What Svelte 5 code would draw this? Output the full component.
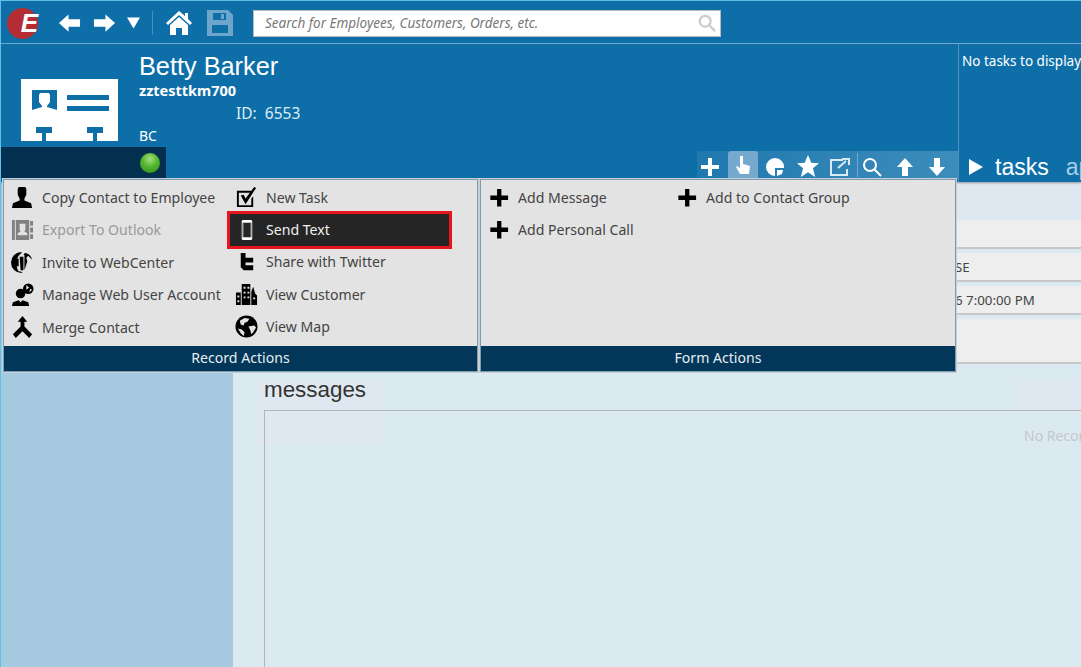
<script lang="ts">
	const recordLeft = [
		{ icon: 'person', label: 'Copy Contact to Employee' },
		{ icon: 'outlook', label: 'Export To Outlook', disabled: true },
		{ icon: 'webcenter', label: 'Invite to WebCenter' },
		{ icon: 'webuser', label: 'Manage Web User Account' },
		{ icon: 'merge', label: 'Merge Contact' }
	];
	const recordRight = [
		{ icon: 'task', label: 'New Task' },
		{ icon: 'phone', label: 'Send Text', active: true },
		{ icon: 'twitter', label: 'Share with Twitter' },
		{ icon: 'city', label: 'View Customer' },
		{ icon: 'globe', label: 'View Map' }
	];
	const formLeft = ['Add Message', 'Add Personal Call'];
	const rows = [
		{ text: '', h: 29 },
		{ text: 'SE', h: 29 },
		{ text: '6 7:00:00 PM', h: 29 },
		{ text: '', h: 45 }
	];
</script>

{#snippet icon(name: string)}
	<svg class="ic" viewBox="0 0 24 24" aria-hidden="true">
		{#if name === 'person'}
			<path d="M8 1h7l1 2v6l-2 4v2l7 3 1 5H1l1-5 7-3v-2L7 9V3z" />
		{:else if name === 'outlook'}
			<path fill="#808080" d="M1 2h3v21H1zM5 2h14v21H5zM20 3h3v5h-3zM20 10h3v5h-3zM20 17h3v5h-3z" />
			<path fill="#e2e2e2" d="M9 6h6v6l-1 2 3 2v2H7v-2l3-2-1-2z" />
		{:else if name === 'webcenter'}
			<path d="M11 1a11 11 0 0 0 0 22l1-1-4-1c-3-3-3-14 1-17l2-2z" />
			<path d="M9 6h4v14h-3zM13 3h3l-1 3zM14 2c4 0 7 3 8 7l-4-4-2 2 1 4-3 9z" />
			<path d="M2 8h6v8H2z" />
		{:else if name === 'webuser'}
			<circle cx="10" cy="11" r="5" />
			<path d="M1 24l1-4 6-2 2 2 2-2 6 2 1 4z" />
			<circle cx="18" cy="6" r="5.500" />
			<path fill="#e2e2e2" d="M16 2l3 3-3 2zM20 6l2 1-3 3z" />
		{:else if name === 'merge'}
			<path d="M12 0l5 6h-3v5l8 8-3 4-7-7-7 7-3-4 8-8V6H7z" />
		{:else if name === 'task'}
			<path d="M2 5h15v2H4v13h13v-7l2-2v11H2z" />
			<path d="M6 10l3-1 2 4 9-12 2 1-11 17z" />
		{:else if name === 'phone'}
			<path fill="#fff" fill-rule="evenodd" d="M8 2h9l1 1v19l-1 1H8l-1-1V3zM8 5v15h9V5z" />
			<path fill="#8a8a8a" d="M8 5h1v15H8zM16 5h1v15h-1z" />
		{:else if name === 'twitter'}
			<path d="M6 3h5v5h8v5h-8v3h8v5H9l-3-3z" />
		{:else if name === 'city'}
			<path d="M7 1h9v22H7zM1 10h5v13H1zM17 9l2-5 2 7 2 2v10h-6z" />
			<path fill="#e2e2e2" d="M9 4h2v2H9zM13 4h2v2h-2zM9 9h2v2H9zM13 9h2v2h-2zM9 14h2v2H9zM13 14h2v2h-2zM2.500 13h2v2h-2zM2.500 18h2v2h-2zM19 15h2v2h-2z" />
		{:else if name === 'globe'}
			<circle cx="12" cy="12" r="11.500" />
			<path fill="#e2e2e2" d="M5 6l5-3 5 1-2 3-3 1-1 3-3-1zM14 12l6-1 2 2-3 5-2 2-1-4zM3 14l4 1 3 3-1 4-3-3z" />
		{:else if name === 'plus'}
			<path d="M10.500 3h4.500v7h7v4.500h-7v7h-4.500v-7h-7V10h7z" />
		{/if}
	</svg>
{/snippet}

{#snippet action(item: { icon: string; label: string; disabled?: boolean; active?: boolean })}
	<div class="action" class:disabled={item.disabled} class:active={item.active}>
		{@render icon(item.icon)}
		<span>{item.label}</span>
	</div>
{/snippet}

<div class="page">
	<header class="topbar">
		<div class="logo"><span>E</span></div>
		<div class="nav">
			<svg viewBox="0 0 24 20" class="arrow"><path d="M1 10l10-9v5h12v8H11v5z" /></svg>
			<svg viewBox="0 0 24 20" class="arrow"><path d="M23 10L13 1v5H1v8h12v5z" /></svg>
			<svg viewBox="0 0 14 12" class="drop"><path d="M0 0h14L7 12z" /></svg>
		</div>
		<div class="divider"></div>
		<svg viewBox="0 0 26 26" class="home">
			<path d="M13 1L0 13l2 2L13 5l11 10 2-2-4-4V3h-3v3z" />
			<path d="M4 15l9-8 9 8v10h-6v-7h-6v7H4z" />
		</svg>
		<svg viewBox="0 0 26 26" class="save">
			<path fill-rule="evenodd" d="M0 0h21l5 5v21H0zM6 3v7h13V3zM14 4h3v5h-3zM5 15v8h16v-8z" />
		</svg>
		<div class="search">
			<span>Search for Employees, Customers, Orders, etc.</span>
			<svg viewBox="0 0 20 20" class="glass"><circle cx="8" cy="8" r="6" /><path d="M12.500 12.500L19 19" /></svg>
		</div>
	</header>

	<section class="hero">
		<div class="profile">
			<div class="identity">
				<div class="card-wrap">
					<svg viewBox="0 0 97 62" class="card">
						<path fill="#fff" d="M0 0h97v62H0z" />
						<path fill="#0e6fa8" d="M11 11h25v23H11z" />
						<path fill="#fff" d="M19 14h9l1 2v7l-3 4v1l10 3v3H11v-3l10-3v-1l-3-4v-7z" />
						<path fill="#0e6fa8" d="M46 16h42v5H46zM46 27h42v5H46zM15 48h16v6h-6v8h-4v-8h-6zM66 48h16v6h-6v8h-4v-8h-6z" />
					</svg>
				</div>
				<div class="who">
					<h1>Betty Barker</h1>
					<div class="login">zztesttkm700</div>
					<div class="id">ID:&nbsp;&nbsp;6553</div>
					<div class="region">BC</div>
				</div>
			</div>
			<div class="strip-row">
				<div class="status"><div class="led"></div></div>
				<div class="tools">
					<svg viewBox="0 0 20 20" class="t"><path d="M8 1h4v7h7v4h-7v7H8v-7H1V8h7z" /></svg>
					<div class="t-on">
						<svg viewBox="0 0 20 20" class="t"><path d="M7 1h3v8l7 2-1 8H7L3 12l1-1 3 2z" /></svg>
					</div>
					<svg viewBox="0 0 20 20" class="t pie"><path d="M10 1a9 9 0 1 0 0 18v-8h9a9 9 0 0 0-9-10zM12 13h6l-1 4-5 2z" /></svg>
					<svg viewBox="0 0 20 20" class="t star"><path d="M10 0l3 7 7 .5-5.500 4.500 2 8-6.500-4.300L3.500 20l2-8L0 7.500 7 7z" /></svg>
					<svg viewBox="0 0 22 20" class="t open"><path d="M14 3H2v15h16v-6" /><path d="M9 11l8-7M13 2h7v6" /></svg>
					<div class="tool-sep"></div>
					<svg viewBox="0 0 20 20" class="t lens"><circle cx="8" cy="8" r="6" /><path d="M12.500 12.500L19 19" /></svg>
					<svg viewBox="0 0 20 20" class="t up"><path d="M10 1l8 9h-5v9H7v-9H2z" /></svg>
					<svg viewBox="0 0 20 20" class="t down"><path d="M10 19l8-9h-5V1H7v9H2z" /></svg>
				</div>
			</div>
		</div>
		<aside class="tasks">
			<p>No tasks to display</p>
			<div class="tabs">
				<svg viewBox="0 0 14 16" class="play"><path d="M0 0l14 8-14 8z" /></svg>
				<span class="tab">tasks</span>
				<span class="tab dim">appointments</span>
			</div>
		</aside>
	</section>

	<div class="body">
		<nav class="side"></nav>
		<main class="content">
			<div class="form">
				{#each rows as row}
					<div class="row" style="height: {row.h}px">{row.text}</div>
				{/each}
			</div>
			<div class="ghost one"></div>
			<div class="ghost two"></div>
			<h2>messages</h2>
			<div class="grid-box"><span>No Records</span></div>
		</main>
	</div>

	<div class="popup">
		<div class="panel record">
			<div class="items">
				<div class="col first">
					{#each recordLeft as item}
						{@render action(item)}
					{/each}
				</div>
				<div class="col second">
					{#each recordRight as item}
						{@render action(item)}
					{/each}
				</div>
			</div>
			<div class="title">Record Actions</div>
		</div>
		<div class="panel formacts">
			<div class="items">
				<div class="col third">
					{#each formLeft as label}
						{@render action({ icon: 'plus', label })}
					{/each}
				</div>
				<div class="col">
					{@render action({ icon: 'plus', label: 'Add to Contact Group' })}
				</div>
			</div>
			<div class="title">Form Actions</div>
		</div>
	</div>
</div>

<style>
	:global(body) {
		margin: 0;
		background: #dbe9f1;
	}

	.page {
		position: relative;
		width: 1081px;
		height: 667px;
		overflow: hidden;
		display: flex;
		flex-direction: column;
		font-family: 'Noto Sans', sans-serif;
		border-left: 1px solid #5fbfe6;
		box-sizing: border-box;
	}

	.topbar {
		height: 44px;
		box-sizing: border-box;
		flex: none;
		display: flex;
		align-items: center;
		background: #0e6fa8;
		border-top: 1px solid #5fbfe6;
		border-bottom: 1px solid #74acd0;
		padding: 2px 0 0 6px;
	}

	.logo {
		width: 31px;
		height: 31px;
		border-radius: 50%;
		background: #b32d33;
		display: flex;
		align-items: center;
		justify-content: flex-end;
	}

	.logo span {
		color: #fff;
		font: italic 700 26px/1 'Liberation Sans', sans-serif;
	}

	.nav {
		display: flex;
		align-items: center;
		gap: 12px;
		margin-left: 20px;
		fill: #fff;
	}

	.arrow {
		width: 23px;
		height: 20px;
	}

	.drop {
		width: 13px;
		height: 12px;
		margin-left: -1px;
	}

	.divider {
		width: 1px;
		height: 24px;
		background: #4b8fbc;
		margin: 0 13px 0 12px;
	}

	.home {
		width: 26px;
		height: 26px;
		fill: #fff;
	}

	.save {
		width: 26px;
		height: 26px;
		fill: #6ea6cb;
		margin-left: 15px;
	}

	.search {
		width: 468px;
		height: 27px;
		box-sizing: border-box;
		margin-left: 20px;
		background: #fff;
		border: 1px solid #bbb;
		display: flex;
		align-items: center;
		justify-content: space-between;
		padding: 0 4px 0 11px;
		font-style: italic;
		font-size: 13.500px;
		color: #777;
	}

	.glass {
		width: 18px;
		height: 18px;
		fill: none;
		stroke: #ccc;
		stroke-width: 2.500;
	}

	.hero {
		height: 138px;
		flex: none;
		display: flex;
		background: #0e6fa8;
		color: #fff;
		box-shadow: 0 1px 2px rgba(0, 0, 0, 0.35);
		z-index: 1;
	}

	.profile {
		width: 957px;
		flex: none;
		display: flex;
		flex-direction: column;
		justify-content: space-between;
	}

	.identity {
		display: flex;
	}

	.card-wrap {
		padding: 35px 21px 0 20px;
	}

	.card {
		width: 97px;
		height: 62px;
		display: block;
	}

	.who {
		font-size: 14.500px;
		line-height: 20px;
	}

	h1 {
		margin: 6px 0 0;
		font: 400 25.300px/32px 'Liberation Sans', sans-serif;
	}

	.login {
		font-weight: 700;
		margin-top: -2px;
	}

	.id {
		margin: 3px 0 0 97px;
		font-size: 15.500px;
		color: #dcebf5;
	}

	.region {
		margin-top: 3px;
		font-size: 14px;
	}

	.strip-row {
		display: flex;
		justify-content: space-between;
		align-items: flex-end;
		height: 35px;
	}

	.status {
		width: 165px;
		height: 31px;
		background: #03304f;
		display: flex;
		justify-content: flex-end;
		align-items: center;
		padding-right: 6px;
		box-sizing: border-box;
		margin-bottom: 4px;
	}

	.led {
		width: 20px;
		height: 20px;
		border-radius: 50%;
		background: radial-gradient(circle at 50% 30%, #a6e07f 0, #54b530 45%, #2f8f1a 100%);
	}

	.tools {
		width: 261px;
		height: 28px;
		box-sizing: border-box;
		display: flex;
		align-items: flex-end;
		padding: 0 0 2px 3px;
		margin-bottom: 3px;
		background: linear-gradient(90deg, #1f79ae, #3d8cbb);
		fill: #fff;
	}

	.t {
		width: 20px;
		height: 20px;
		flex: none;
	}

	.t-on {
		width: 30px;
		height: 28px;
		margin: 0 0 -2px 8px;
		background: #75a9cd;
		border-radius: 3px 3px 0 0;
		display: flex;
		align-items: center;
		justify-content: center;
	}

	.pie {
		margin-left: 7px;
	}

	.star {
		width: 22px;
		height: 22px;
		margin-left: 12px;
	}

	.open {
		width: 22px;
		margin-left: 10px;
		fill: none;
		stroke: #dceaf4;
		stroke-width: 2;
	}

	.tool-sep {
		width: 1px;
		height: 24px;
		background: #74a9cc;
		margin-left: 6px;
	}

	.lens {
		margin-left: 4px;
		fill: none;
		stroke: #fff;
		stroke-width: 2;
	}

	.up {
		margin-left: 13px;
	}

	.down {
		margin-left: 12px;
	}

	.tasks {
		flex: 1;
		border-left: 1px solid #4d92bf;
		display: flex;
		flex-direction: column;
		justify-content: space-between;
		padding-left: 3px;
		white-space: nowrap;
	}

	.tasks p {
		margin: 8px 0 0;
		font-size: 13.500px;
		line-height: 18px;
	}

	.tabs {
		display: flex;
		align-items: center;
		gap: 12px;
		height: 28px;
		margin: 0 0 1px 7px;
		font: 23px/28px 'Liberation Sans', sans-serif;
	}

	.play {
		width: 14px;
		height: 16px;
		fill: #fff;
	}

	.tab.dim {
		color: #a9cde3;
		margin-left: 5px;
	}

	.body {
		flex: 1;
		display: flex;
		min-height: 0;
	}

	.side {
		width: 232px;
		flex: none;
		background: #a5cadf;
	}

	.content {
		position: relative;
		flex: 1;
		background: #dbe9f1;
		padding-left: 31px;
		min-width: 0;
	}

	.ghost {
		position: absolute;
		background: #dfe7f1;
	}

	.ghost.one {
		left: 24px;
		top: 199px;
		width: 124px;
		height: 64px;
	}

	.ghost.two {
		left: 787px;
		top: 199px;
		width: 61px;
		height: 30px;
	}

	.form {
		margin-left: -31px;
		padding-top: 38px;
		display: flex;
		flex-direction: column;
		gap: 4px;
		background: linear-gradient(#dfe7f1 36px, #dbe9f1 36px);
		height: 144px;
	}

	.row {
		background: #eeeeee;
		border-bottom: 2px solid #c8c8c8;
		box-sizing: border-box;
		font-size: 13.300px;
		color: #444;
		display: flex;
		align-items: center;
		padding-left: 722px;
		white-space: nowrap;
	}

	h2 {
		position: relative;
		margin: 13px 0 7px;
		font: 400 22.400px/26px 'Liberation Sans', sans-serif;
		color: #333;
	}

	.grid-box {
		position: relative;
		height: 400px;
		margin-right: -20px;
		border: 1px solid #b5b5b5;
		padding: 15px 0 0 759px;
		font-size: 14px;
		color: #c4c8cb;
		white-space: nowrap;
		overflow: hidden;
	}

	.popup {
		position: absolute;
		left: 2px;
		top: 179px;
		display: flex;
		gap: 2px;
		z-index: 2;
	}

	.panel {
		height: 193px;
		box-sizing: border-box;
		width: 475px;
		background: #e3e3e3;
		border: 1px solid #7d9cb0;
		outline: 1px solid #c6d0d6;
		display: flex;
		flex-direction: column;
	}

	.formacts {
		width: 476px;
	}

	.items {
		flex: 1;
		display: flex;
		padding-top: 1px;
	}

	.col {
		display: flex;
		flex-direction: column;
		gap: 0;
	}

	.first {
		width: 231px;
		padding-left: 7px;
		box-sizing: border-box;
	}

	.third {
		width: 194px;
		padding-left: 6px;
		box-sizing: border-box;
	}

	.title {
		height: 25px;
		flex: none;
		background: #03375a;
		color: #e6eef3;
		font-size: 14.100px;
		line-height: 23px;
		text-align: center;
	}

	.action {
		height: 32.500px;
		display: flex;
		align-items: center;
		gap: 8px;
		font-size: 14.100px;
		color: #444;
		white-space: nowrap;
	}

	.action.disabled {
		color: #999;
	}

	.action.active {
		width: 225px;
		height: 38px;
		box-sizing: border-box;
		margin: -3px 0 -3px -8px;
		padding-left: 5px;
		background: #252525;
		border: 3px solid #e8141e;
		color: #f0f0f0;
	}

	.ic {
		width: 23px;
		height: 23px;
		flex: none;
		fill: #000;
	}
</style>
